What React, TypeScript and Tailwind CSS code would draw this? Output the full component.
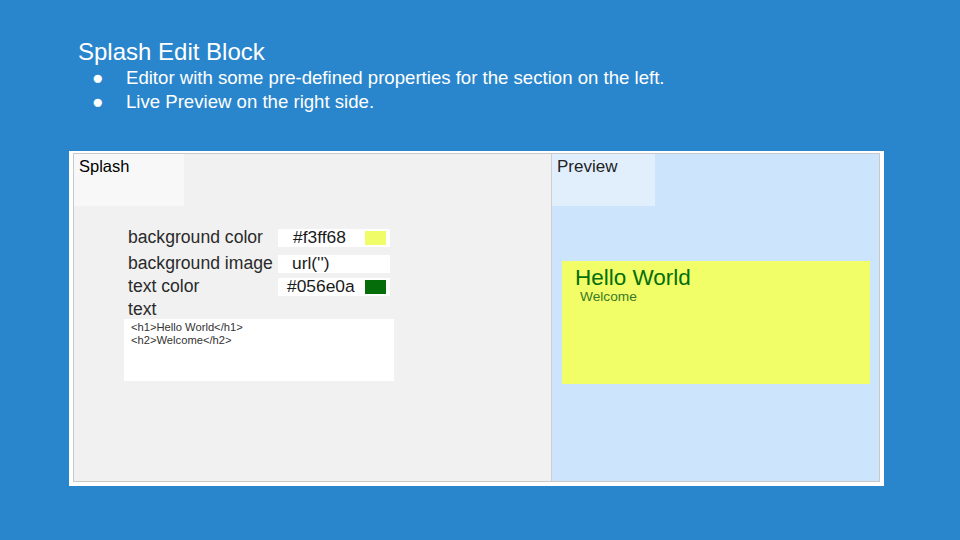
const FONT = "font-['Liberation_Sans',Arial,sans-serif]";

function Field({ label, value, pad, swatch }: { label: string; value: string; pad: string; swatch?: string }) {
  return (
    <div className="flex h-[23px] items-center">
      <div className="w-[150px] text-[17.6px] leading-none text-[#2a2a2a]">{label}</div>
      <div className={`flex h-[18px] w-[112px] items-center justify-between bg-white pr-[4px] ${pad}`}>
        <span className="text-[17.4px] leading-none text-[#1a1a1a]">{value}</span>
        {swatch && <span className="h-[14px] w-[21px]" style={{ background: swatch }} />}
      </div>
    </div>
  );
}

export default function App() {
  return (
    <div className={`${FONT} h-[540px] w-[960px] overflow-hidden bg-[#2986cc]`}>
      {/* Slide header */}
      <div className="pl-[78px] pt-[38px] text-white">
        <div className="text-[24px] leading-[28px]">Splash Edit Block</div>
        <ul className="text-[18.6px] leading-[24px]">
          <li className="flex">
            <span className="w-[48px] pl-[14px] text-[19px]">●</span>
            Editor with some pre-defined properties for the section on the left.
          </li>
          <li className="flex">
            <span className="w-[48px] pl-[14px] text-[19px]">●</span>
            Live Preview on the right side.
          </li>
        </ul>
      </div>

      {/* Screenshot frame */}
      <div className="ml-[69px] mt-[37px] h-[335px] w-[815px] bg-white pb-[4px] pl-[4px] pr-[4px] pt-[2px]">
        <div className="flex h-full border border-[#c9c9c9]">
          {/* Editor */}
          <div className="w-[478px] border-r border-[#cfcfcf] bg-[#f1f1f1]">
            <div className="h-[52px] w-[110px] bg-[#f8f8f8] pl-[5px] pt-[3px] text-[16.5px] leading-[18px] text-black">
              Splash
            </div>
            <div className="pl-[54px] pt-[20px]">
              <Field label="background color" value="#f3ff68" pad="pl-[15px]" swatch="#f0fd68" />
              <div className="h-[3px]" />
              <Field label="background image" value="url('')" pad="pl-[14px]" />
              <Field label="text color" value="#056e0a" pad="pl-[9px]" swatch="#056e0a" />
              <div className="h-[21px] text-[17.6px] leading-[23px] text-[#2a2a2a]">text</div>
            </div>
            <div className="ml-[50px] h-[62px] w-[270px] bg-white px-[7px] pt-[2px] text-[11.2px] leading-[13px] text-[#333]">
              <div>&lt;h1&gt;Hello World&lt;/h1&gt;</div>
              <div>&lt;h2&gt;Welcome&lt;/h2&gt;</div>
            </div>
          </div>

          {/* Preview */}
          <div className="flex-1 bg-[#cce5fc]">
            <div className="h-[52px] w-[103px] bg-[#e1effd] pl-[5px] pt-[4px] text-[17px] leading-[18px] text-[#222]">
              Preview
            </div>
            <div className="ml-[10px] mt-[55px] h-[123px] w-[308px] bg-[#f1fe68] pl-[13px] pt-[5px]">
              <div className="text-[22.5px] leading-[24px] text-[#056e0a]">Hello World</div>
              <div className="pl-[5px] text-[13.7px] leading-[14px] text-[#3a7a24]">Welcome</div>
            </div>
          </div>
        </div>
      </div>
    </div>
  );
}
